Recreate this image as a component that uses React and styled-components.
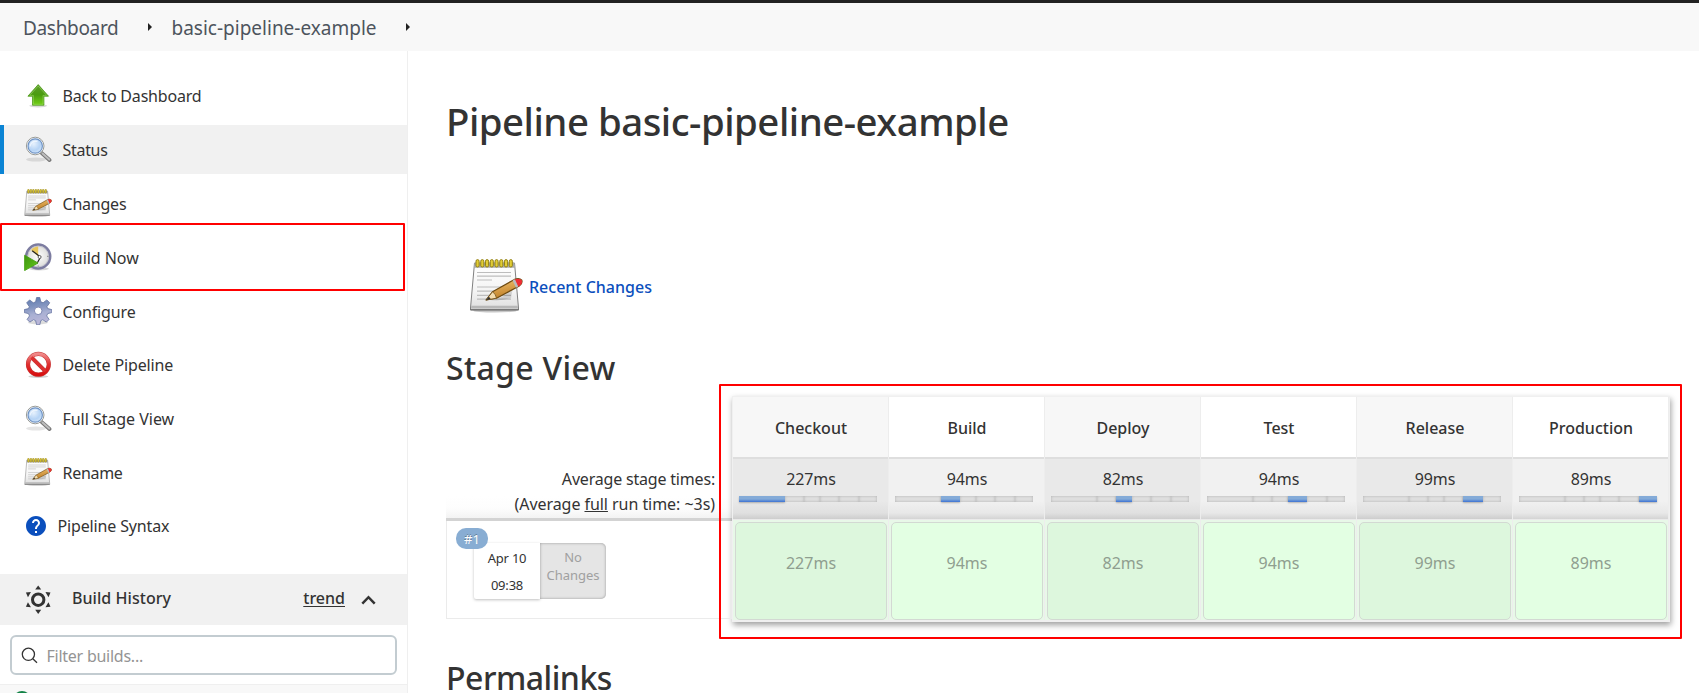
import React from "react";
import styled, { createGlobalStyle } from "styled-components";

const Global = createGlobalStyle`
  * { box-sizing: border-box; }
  html, body { margin: 0; padding: 0; background: #fff; overflow: hidden; }
  body { font-family: "Noto Sans", "Open Sans", sans-serif; font-size: 16px; color: #333; }
  h1, h2, p { margin: 0; font-weight: 500; }
`;

const Page = styled.div`
  position: relative;
  height: 693px;
  overflow: hidden;
  display: flex;
  flex-direction: column;
`;
const Breadcrumbs = styled.nav`
  flex: none;
  height: 51px;
  border-top: 3px solid #222;
  background: #f8f8f8;
  display: flex;
  align-items: center;
  padding: 1px 0 0 23px;
  color: #4d545d;
  font-size: 19px;
`;
const Crumb = styled.span`
  width: ${(p) => p.$w}px;
  white-space: nowrap;
  letter-spacing: ${(p) => p.$ls || 0}px;
`;
const CrumbArrow = styled.span`
  width: 0;
  height: 0;
  margin: 0 ${(p) => p.$after || 0}px 1px 0;
  border: solid transparent;
  border-width: 4px 0 4px 4px;
  border-left-color: #222;
`;
const Body = styled.div`
  flex: 1;
  min-height: 0;
  display: flex;
`;
const Side = styled.aside`
  flex: none;
  width: 408px;
  border-right: 1px solid #efefef;
  display: flex;
  flex-direction: column;
`;
const Tasks = styled.ul`
  list-style: none;
  margin: 0;
  padding: 20.2px 0 0;
  height: 523px;
  display: flex;
  flex-direction: column;
  gap: 4.8px;
`;
const Task = styled.li`
  flex: none;
  height: 49px;
  display: flex;
  align-items: center;
  padding-left: ${(p) => (p.$active ? 20 : 24)}px;
  border-left: ${(p) => (p.$active ? "4px solid #0b84d4" : "0")};
  background: ${(p) => (p.$active ? "#f1f1f1" : "transparent")};
  svg { flex: none; margin-right: ${(p) => p.$gap || 10.5}px; }
`;
const TaskLabel = styled.span`
  white-space: nowrap;
  padding-top: ${(p) => p.$drop ?? 1}px;
  letter-spacing: ${(p) => p.$ls || 0}px;
`;
const HistoryHeader = styled.div`
  flex: none;
  height: 51px;
  background: #f1f1f1;
  display: flex;
  align-items: center;
  padding: 0 31px 0 24px;
  font-weight: 500;
`;
const HistoryTitle = styled.span`
  flex: 1;
  margin: -4px 0 0 20px;
  letter-spacing: 0.05px;
`;
const Trend = styled.a`
  text-decoration: underline;
  text-underline-offset: 2px;
  margin: -4px 16px 0 0;
`;
const Filter = styled.div`
  flex: none;
  margin: 10px 10px 9px;
  width: 387px;
  height: 40px;
  border: 2px solid #c3ccd1;
  border-radius: 6px;
  display: flex;
  align-items: center;
  padding-left: 9px;
  gap: 8.5px;
  color: #949494;
  letter-spacing: -0.25px;
  span { padding-top: 1px; }
`;
const BuildRow = styled.div`
  flex: 1;
  min-height: 0;
  overflow: hidden;
  background: #f8f8f8;
  border-top: 1px solid #efefef;
  padding: 6px 0 0 13px;
`;
const Dot = styled.div`
  width: 18px;
  height: 18px;
  border-radius: 50%;
  background: #138347;
`;
const Main = styled.main`
  flex: 1;
  min-width: 0;
  padding: 46px 0 0 38px;
  display: flex;
  flex-direction: column;
`;
const Title = styled.h1`
  font-size: 38.4px;
  line-height: 48px;
  white-space: nowrap;
  letter-spacing: ${(p) => p.$ls || 0}px;
`;
const SubTitle = styled.h2`
  font-size: 32px;
  line-height: ${(p) => p.$lh || 40}px;
  white-space: nowrap;
  letter-spacing: ${(p) => p.$ls || 0}px;
`;
const Recent = styled.a`
  display: flex;
  align-items: center;
  height: 56px;
  margin: 114px 0 35px 23px;
  color: #0b4fbd;
  font-weight: 500;
  gap: 6px;
  span { padding-top: 2px; }
`;
const StageView = styled.section`
  display: flex;
  align-items: flex-start;
  margin: 8px 0 36px;
`;
const RunColumn = styled.div`
  width: 286px;
`;
const Averages = styled.div`
  height: 125px;
  padding: 0 17px 1px 0;
  display: flex;
  flex-direction: column;
  justify-content: flex-end;
  text-align: right;
  line-height: 25px;
  border-bottom: 3px solid #d3d3d3;
  background: linear-gradient(to bottom, #fff 82%, #fdfdfd 92%, #f3f3f3);
`;
const AverageLine = styled.div`
  letter-spacing: ${(p) => p.$ls}px;
`;
const Run = styled.div`
  position: relative;
  height: 98px;
  border: 1px solid #ebebeb;
  border-top: 0;
  display: flex;
  padding: 22px 0 0 27px;
  font-size: 13px;
`;
const RunBadge = styled.span`
  position: absolute;
  left: 9px;
  top: 7px;
  width: 32px;
  height: 21px;
  border-radius: 10px;
  background: #88add3;
  color: #fff;
  font-size: 13px;
  line-height: 22px;
  text-align: center;
  text-shadow: 0 -1px 0 rgba(0, 0, 0, 0.3);
`;
const RunDate = styled.div`
  width: 66px;
  height: 56px;
  line-height: 27px;
  padding-top: 2px;
  text-align: center;
  background: #fff;
  box-shadow: 0 1px 3px rgba(0, 0, 0, 0.25);
  border-radius: 2px 0 0 2px;
  letter-spacing: -0.2px;
`;
const RunChanges = styled.div`
  position: relative;
  width: 66px;
  height: 56px;
  padding-top: 5px;
  line-height: 18px;
  text-align: center;
  color: #a0a0a0;
  background: #e5e5e5;
  border-radius: 0 5px 5px 0;
  box-shadow: inset 0 0 3px rgba(0, 0, 0, 0.35);
`;
const Stages = styled.div`
  display: flex;
  width: 938px;
  height: 226px;
  border: 1px solid #f0f0f0;
  border-bottom-width: 2px;
  box-shadow: 1px 3px 6px rgba(0, 0, 0, 0.38);
`;
const Stage = styled.div`
  flex: 1;
  display: flex;
  flex-direction: column;
  border-right: 1px solid #ededed;
  background: ${(p) => (p.$odd ? "#f7f7f7" : "#fff")};
`;
const StageName = styled.div`
  height: 60px;
  line-height: 63px;
  padding-left: 1px;
  text-align: center;
  font-weight: 500;
`;
const StageAverage = styled.div`
  height: 63px;
  border-top: 2px solid #dedede;
  border-bottom: 1px solid #eaeaea;
  padding: 7px 11px 0 6px;
  background: ${(p) =>
    p.$odd
      ? "linear-gradient(to bottom, #e9e9e9 70%, #e0e0e0 90%, #cdcdcd)"
      : "linear-gradient(to bottom, #f1f1f1 70%, #e8e8e8 90%, #d4d4d4)"};
`;
const AverageTime = styled.div`
  margin-left: 6px;
  line-height: 26px;
  text-align: center;
  letter-spacing: -0.1px;
`;
const Meter = styled.div`
  display: flex;
  width: 138px;
  height: 6px;
  margin-top: 4px;
`;
const Segment = styled.i`
  flex: ${(p) => p.$weight} 0 0;
  background: ${(p) => (p.$on ? "linear-gradient(to bottom, #84abd8 50%, #3d73d3)" : "#e0e0e0")};
  box-shadow: ${(p) =>
    p.$on ? "0 1px 2px rgba(0,0,0,0.25)" : "inset 0 0 3px rgba(0,0,0,0.22)"};
`;
const StageResult = styled.div`
  flex: 1;
  padding: 2px 1px 0 2px;
  background: #e8f8e8;
`;
const StageResultBox = styled.div`
  height: 98px;
  border: 1px solid #d3d9d3;
  border-radius: 5px;
  line-height: 80px;
  text-align: center;
  color: #8f9e8f;
  background: ${(p) => (p.$odd ? "#ddf7dd" : "#e3ffe3")};
`;
const Highlight = styled.div`
  position: absolute;
  left: ${(p) => p.$x}px;
  top: ${(p) => p.$y}px;
  width: ${(p) => p.$w}px;
  height: ${(p) => p.$h}px;
  border: 2px solid #f00;
  border-radius: 1px;
  pointer-events: none;
`;

const UpIcon = () => (
  <svg width="28" height="28" viewBox="0 0 28 28">
    <defs>
      <linearGradient id="up" x1="0" y1="0" x2="0" y2="1">
        <stop offset="0" stopColor="#5d9c2c" />
        <stop offset="0.5" stopColor="#4a9c0e" />
        <stop offset="1" stopColor="#73d216" />
      </linearGradient>
    </defs>
    <ellipse cx="14.2" cy="23.8" rx="9" ry="1.6" fill="#000" opacity="0.15" />
    <path d="M14.2 2.6 24.5 14.2H19.9V23.2H8.5V14.2H3.9Z" fill="url(#up)" stroke="#4f9a1c" strokeWidth="0.8" />
    <path d="M14.2 4 22.6 13.4H19V22.3H9.4V13.4H5.8Z" fill="none" stroke="#a5dc74" strokeWidth="0.7" opacity="0.7" />
  </svg>
);
const SearchIcon = () => (
  <svg width="28" height="28" viewBox="0 0 28 28">
    <defs>
      <radialGradient id="lens" cx="0.4" cy="0.35" r="0.75">
        <stop offset="0" stopColor="#e6f1fd" />
        <stop offset="0.6" stopColor="#b5d3f5" />
        <stop offset="1" stopColor="#dcebfb" />
      </radialGradient>
    </defs>
    <ellipse cx="12" cy="24.5" rx="10" ry="2" fill="#000" opacity="0.1" />
    <path d="M17.5 17.8 25.5 25" stroke="#777" strokeWidth="3.8" strokeLinecap="round" />
    <path d="M18.5 18.5 25.2 24.6" stroke="#bdbdbd" strokeWidth="2" strokeLinecap="round" />
    <circle cx="11.2" cy="11" r="8.8" fill="#fff" stroke="#9a9c98" strokeWidth="1" />
    <circle cx="11.2" cy="11" r="7.2" fill="url(#lens)" stroke="#6f93c4" strokeWidth="1.2" />
    <path d="M6 11.5C6.4 7.5 9.5 5.8 13.5 6.4" stroke="#fff" strokeWidth="1.4" fill="none" opacity="0.6" />
  </svg>
);
const NotepadIcon = ({ size }) => (
  <svg width={size} height={size} viewBox="0 0 54 54">
    <defs>
      <linearGradient id="paper" x1="0" y1="0" x2="0" y2="1">
        <stop offset="0" stopColor="#fff" />
        <stop offset="0.6" stopColor="#f4f4f4" />
        <stop offset="1" stopColor="#dedede" />
      </linearGradient>
      <linearGradient id="pencil" x1="0.3" y1="0" x2="0.6" y2="1">
        <stop offset="0" stopColor="#f0c070" />
        <stop offset="1" stopColor="#b9771c" />
      </linearGradient>
    </defs>
    <ellipse cx="26" cy="51.8" rx="22" ry="1.8" fill="#000" opacity="0.22" />
    <path d="M5.5 4H45.5L49.5 49V51H1.5V49Z" fill="url(#paper)" stroke="#808080" strokeWidth="1" strokeLinejoin="round" />
    <path d="M5.5 4H45.5L46.1 8.8H5Z" fill="#aaa" />
    <path d="M2.4 46.8H48.7L49 49.6H2Z" fill="#b8b8b8" />
    <path d="M1.5 50.8H49.5" stroke="#666" strokeWidth="1.1" />
    <path d="M8 13.5H42M8 17.2H42M8 21H23M8 28H42M8 32.2H38M8 36.3H42M8 40.2H42" stroke="#bdbdbd" strokeWidth="1.2" />
    {[0, 1, 2, 3, 4, 5, 6, 7].map((i) => (
      <rect key={i} x={7 + i * 4.75} y="0.6" width="3.1" height="7.4" rx="1.5" fill="#e2cd35" stroke="#8c7a10" strokeWidth="0.9" />
    ))}
    <path d="M18 40.5C26 42 38 37 44 28L42 39Q30 43 18 40.5Z" fill="#000" opacity="0.13" />
    <path d="M17 41 23.5 32.8 45.5 20.4Q50.5 18.6 52.8 21.2 53.8 24.8 50.3 27L27.5 39.2Z" fill="url(#pencil)" stroke="#6e4b12" strokeWidth="1.2" strokeLinejoin="round" />
    <path d="M45.9 20.3Q50.5 18.6 52.8 21.2 53.8 24.8 50.3 27L48.9 27.7 45.7 20.4Z" fill="#ee2d35" />
    <path d="M43.6 21.5 45.8 20.3 49.2 27.6 47 28.7Z" fill="#b9bcc0" />
    <path d="M17 41 23.5 32.8Q27 35 27.5 39.2Z" fill="#f3dcae" stroke="#6e4b12" strokeWidth="0.8" />
    <path d="M17 41.2 19.8 37.6 21.7 40Z" fill="#333" />
  </svg>
);
const ClockIcon = () => (
  <svg width="28" height="28" viewBox="0 0 28 28">
    <defs>
      <radialGradient id="face"><stop offset="0" stopColor="#fff" /><stop offset="1" stopColor="#dadad6" /></radialGradient>
      <linearGradient id="play" x1="0" y1="0" x2="1" y2="1"><stop offset="0" stopColor="#3f9411" /><stop offset="1" stopColor="#63c91a" /></linearGradient>
    </defs>
    <ellipse cx="15" cy="25.8" rx="10" ry="1.6" fill="#000" opacity="0.16" />
    <circle cx="14.2" cy="13.5" r="12" fill="url(#face)" stroke="#7c7ca0" strokeWidth="2.5" />
    <circle cx="14.2" cy="13.5" r="10.4" fill="none" stroke="#b8b8c8" strokeWidth="0.7" />
    <path d="M14.2 13.5 7 7Q10 3.6 14.2 3.5Z" fill="#e8c75c" />
    <path d="M8.2 7.8 16.5 14 13 20.5" stroke="#222" strokeWidth="1.2" fill="none" />
    <circle cx="15.6" cy="14" r="1.5" fill="#fff" stroke="#444" strokeWidth="0.8" />
    <path d="M23 13.3h1.6M14.2 22.5v1.2" stroke="#888" strokeWidth="1" />
    <path d="M0.6 12.2 14 20 0.6 27.6Z" fill="url(#play)" stroke="#4aa316" strokeWidth="0.9" />
  </svg>
);
const GearIcon = () => (
  <svg width="28" height="28" viewBox="0 0 28 28">
    <defs>
      <linearGradient id="gear" x1="0.3" y1="0" x2="0.5" y2="1">
        <stop offset="0" stopColor="#5f7cb0" />
        <stop offset="0.35" stopColor="#8395c0" />
        <stop offset="0.6" stopColor="#a9b0d3" />
        <stop offset="1" stopColor="#bdb7d9" />
      </linearGradient>
    </defs>
    <ellipse cx="14" cy="25.5" rx="10" ry="1.8" fill="#000" opacity="0.14" />
    <path
      fill="url(#gear)"
      stroke="#63729f"
      strokeWidth="0.8"
      strokeLinejoin="round"
      d="M12.6 0.5h3.2l1 4.3 2.3 1 3.7-2.9 2.9 2.9-2.8 3.9.8 1.9 4.1 1v3l-4.1 1-1 2.3 2.4 3.5-2.7 2.7-3.6-2.3-2 .8-1 4.2h-3.2l-1-4.2-2.2-.8-3.6 2.3-2.7-2.7 2.4-3.5-1-2.3-4.2-1v-3l4.2-1 .8-1.9-2.6-3.9 2.9-2.9 3.7 2.9 2.3-1Z"
    />
    <circle cx="14.2" cy="13.8" r="3.8" fill="#fff" stroke="#8088b4" strokeWidth="1" />
  </svg>
);
const StopIcon = () => (
  <svg width="28" height="28" viewBox="0 0 28 28">
    <defs>
      <linearGradient id="stop" x1="0" y1="0" x2="0" y2="1"><stop offset="0" stopColor="#f08a8a" /><stop offset="0.5" stopColor="#e03030" /><stop offset="1" stopColor="#d81010" /></linearGradient>
    </defs>
    <ellipse cx="14.3" cy="25.6" rx="10" ry="1.4" fill="#000" opacity="0.18" />
    <circle cx="14.4" cy="13.3" r="10.4" fill="none" stroke="#c43a3a" strokeWidth="4.2" />
    <path d="M7.5 6.4 21.3 20.2" stroke="#c43a3a" strokeWidth="4" />
    <circle cx="14.4" cy="13.3" r="10.4" fill="none" stroke="url(#stop)" strokeWidth="3.2" />
    <path d="M7.5 6.4 21.3 20.2" stroke="#dc3030" strokeWidth="3" />
  </svg>
);
const HelpIcon = () => (
  <svg width="24" height="24" viewBox="0 0 24 24">
    <path
      fill="#0b4fbd"
      d="M12 2C6.48 2 2 6.48 2 12s4.48 10 10 10 10-4.48 10-10S17.52 2 12 2zm1 17h-2v-2h2v2zm2.07-7.75-.9.92C13.45 12.9 13 13.5 13 15h-2v-.5c0-1.1.45-2.1 1.17-2.83l1.24-1.26c.37-.36.59-.86.59-1.41 0-1.1-.9-2-2-2s-2 .9-2 2H8c0-2.21 1.79-4 4-4s4 1.79 4 4c0 .88-.36 1.68-.93 2.25z"
    />
  </svg>
);
const SunIcon = () => (
  <svg width="28" height="30" viewBox="0 0 28 30" fill="#333">
    <circle cx="14.2" cy="14.7" r="5.7" fill="none" stroke="#333" strokeWidth="3" />
    {[0, 60, 120, 180, 240, 300].map((a) => (
      <path key={a} transform={`rotate(${a} 14.2 14.7)`} d="M14.2 0.5 17.2 4.6H11.2Z" />
    ))}
  </svg>
);
const ChevronIcon = () => (
  <svg width="15" height="10" viewBox="0 0 15 10">
    <path d="M1.3 8.6 7.5 2.2 13.7 8.6" fill="none" stroke="#333" strokeWidth="2.5" />
  </svg>
);
const LoupeIcon = () => (
  <svg width="17" height="17" viewBox="0 0 17 17" fill="none" stroke="#333" strokeWidth="1.3">
    <circle cx="7.4" cy="7.3" r="6.1" />
    <path d="M11.8 11.7 16 15.8" />
  </svg>
);

const tasks = [
  { label: "Back to Dashboard", icon: <UpIcon />, ls: -0.19 },
  { label: "Status", icon: <SearchIcon />, active: true, ls: -0.3 },
  { label: "Changes", icon: <NotepadIcon size={28} />, ls: -0.22 },
  { label: "Build Now", icon: <ClockIcon />, ls: -0.05 },
  { label: "Configure", icon: <GearIcon />, ls: -0.15, drop: 2 },
  { label: "Delete Pipeline", icon: <StopIcon />, ls: -0.13 },
  { label: "Full Stage View", icon: <SearchIcon />, ls: -0.04 },
  { label: "Rename", icon: <NotepadIcon size={28} />, ls: -0.3 },
  { label: "Pipeline Syntax", icon: <HelpIcon />, ls: -0.15, gap: 9.5, drop: 0 },
];
const stages = [
  ["Checkout", 227],
  ["Build", 94],
  ["Deploy", 82],
  ["Test", 94],
  ["Release", 99],
  ["Production", 89],
];

export default function App() {
  return (
    <Page>
      <Global />
      <Breadcrumbs>
        <Crumb $w={125} $ls={-0.33}>Dashboard</Crumb>
        <CrumbArrow $after={19.5} />
        <Crumb $w={234.5}>basic-pipeline-example</Crumb>
        <CrumbArrow />
      </Breadcrumbs>
      <Body>
        <Side>
          <Tasks>
            {tasks.map((t) => (
              <Task key={t.label} $active={t.active} $gap={t.gap}>
                {t.icon}
                <TaskLabel $ls={t.ls} $drop={t.drop}>{t.label}</TaskLabel>
              </Task>
            ))}
          </Tasks>
          <HistoryHeader>
            <SunIcon />
            <HistoryTitle>Build History</HistoryTitle>
            <Trend>trend</Trend>
            <ChevronIcon />
          </HistoryHeader>
          <Filter>
            <LoupeIcon />
            <span>Filter builds...</span>
          </Filter>
          <BuildRow>
            <Dot />
          </BuildRow>
        </Side>
        <Main>
          <Title $ls={-0.5}>Pipeline basic-pipeline-example</Title>
          <Recent>
            <NotepadIcon size={54} />
            <span>Recent Changes</span>
          </Recent>
          <SubTitle $ls={0.3}>Stage View</SubTitle>
          <StageView>
            <RunColumn>
              <Averages>
                <AverageLine $ls={-0.19}>Average stage times:</AverageLine>
                <AverageLine $ls={-0.05}>
                  (Average <u>full</u> run time: ~3s)
                </AverageLine>
              </Averages>
              <Run>
                <RunDate>
                  <div>Apr 10</div>
                  <div>09:38</div>
                </RunDate>
                <RunChanges>
                  No
                  <br />
                  Changes
                </RunChanges>
                <RunBadge>#1</RunBadge>
              </Run>
            </RunColumn>
            <Stages>
              {stages.map(([name, ms], i) => (
                <Stage key={name} $odd={i % 2 === 0}>
                  <StageName>{name}</StageName>
                  <StageAverage $odd={i % 2 === 0}>
                    <AverageTime>{ms}ms</AverageTime>
                    <Meter>
                      {stages.map(([n, w]) => (
                        <Segment key={n} $weight={w} $on={n === name} />
                      ))}
                    </Meter>
                  </StageAverage>
                  <StageResult>
                    <StageResultBox $odd={i % 2 === 0}>{ms}ms</StageResultBox>
                  </StageResult>
                </Stage>
              ))}
            </Stages>
          </StageView>
          <SubTitle $ls={-0.5}>Permalinks</SubTitle>
        </Main>
      </Body>
      <Highlight $x={0} $y={223} $w={405} $h={68} />
      <Highlight $x={719} $y={384} $w={963} $h={255} />
    </Page>
  );
}
